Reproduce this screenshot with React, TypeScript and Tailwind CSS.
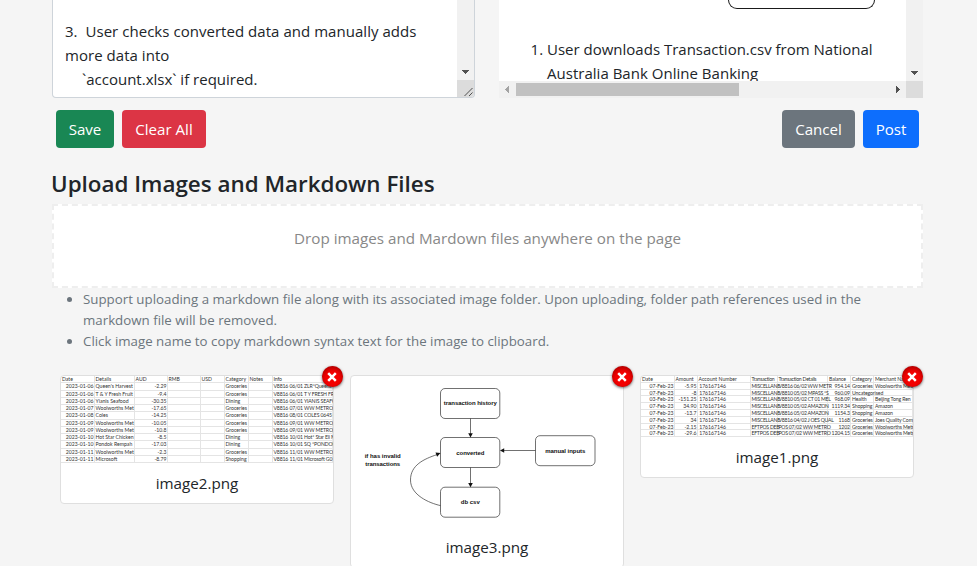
import { ReactNode } from 'react';

type Dir = 'down' | 'left' | 'right';

const arrowShapes: Record<Dir, string> = {
  down: 'M1 3h7v1h-1v1h-1v1h-1v1h-1v-1h-1v-1h-1v-1h-1z',
  left: 'M6 1v7h-1v-1h-1v-1h-1v-1h-1v-1h1v-1h1v-1h1v-1z',
  right: 'M3 1v7h1v-1h1v-1h1v-1h1v-1h-1v-1h-1v-1h-1v-1z',
};

function ScrollArrow({ dir, className }: { dir: Dir; className: string }) {
  return (
    <svg viewBox="0 0 9 9" className={`size-[9px] shrink-0 ${className}`} shapeRendering="crispEdges" fill="currentColor">
      <path d={arrowShapes[dir]} />
    </svg>
  );
}

function Editor() {
  return (
    <div className="flex h-[98px] w-[423px] overflow-hidden rounded-b border border-t-0 border-[#ced4da] bg-white">
      <div className="flex min-w-0 flex-1 flex-col justify-end pb-1.5 pl-3 text-[15px] leading-6 whitespace-pre text-[#212529]">
        <div className="tracking-[0.04px]">3.  User checks converted data and manually adds</div>
        <div className="tracking-[0.04px]">more data into</div>
        <div className="pl-[1.5px]">{'    `account.xlsx` if required.'}</div>
      </div>
      <div className="flex w-[17px] flex-col">
        <div className="flex h-20 items-end justify-center bg-[#f1f1f1] pb-[4px]">
          <ScrollArrow dir="down" className="text-[#505050]" />
        </div>
        <div className="flex h-[17px] items-end justify-end bg-[#dcdcdc]">
          <svg viewBox="0 0 10 10" className="size-[10px]" stroke="#505050" strokeWidth="1">
            <path d="M0.5 9L8.5 1M5 9L8.5 5.5" />
          </svg>
        </div>
      </div>
    </div>
  );
}

function Preview() {
  return (
    <div className="flex h-[98px] w-[424px] flex-col">
      <div className="flex h-[81px]">
        <div className="h-[81px] min-w-0 flex-1 overflow-hidden bg-white">
          <div className="flex h-[37px] justify-end pr-[31px]">
            <div className="h-[9px] w-[147px] rounded-b-[10px] border-[1.5px] border-t-0 border-[#1a1a1a]" />
          </div>
          <ol className="list-decimal pl-12 text-[15px] leading-6 text-[#212529]">
            <li>
              User downloads Transaction.csv from National
              <br />
              <span className="tracking-[0.02px]">Australia Bank Online Banking</span>
            </li>
          </ol>
        </div>
        <div className="flex w-[17px] items-end justify-center bg-[#f1f1f1] pb-[4px]">
          <ScrollArrow dir="down" className="text-[#505050]" />
        </div>
      </div>
      <div className="flex h-[17px] items-center bg-[#f1f1f1]">
        <div className="flex w-[17px] justify-center">
          <ScrollArrow dir="left" className="text-[#a3a3a3]" />
        </div>
        <div className="h-[13px] w-[223px] bg-[#c1c1c1]" />
        <div className="flex flex-1 justify-end pr-1">
          <ScrollArrow dir="right" className="text-[#505050]" />
        </div>
        <div className="h-[17px] w-[17px] bg-[#dcdcdc]" />
      </div>
    </div>
  );
}

function Button({ className, children }: { className: string; children: ReactNode }) {
  return (
    <button className={`flex h-[38px] items-center justify-center rounded text-[15.1px] leading-6 whitespace-nowrap text-white ${className}`}>
      {children}
    </button>
  );
}

type Column = { width: string; right?: string };

const expenseColumns: Column[] = [
  { width: 'w-[33.5px]', right: 'text-right' },
  { width: 'w-[40px]' },
  { width: 'w-[33px]', right: 'text-right' },
  { width: 'w-[33px]' },
  { width: 'w-[24px]' },
  { width: 'w-[24px]' },
  { width: 'w-[24px]' },
  { width: 'w-[60.5px] tracking-[-0.14px]' },
];

const expenseRows = [
  ['Date', 'Details', 'AUD', 'RMB', 'USD', 'Category', 'Notes', 'Info'],
  ['2023-01-06', "Queen's Harvest", '-2.29', '', '', 'Groceries', '', 'V8816 06/01 ZLR*Queens'],
  ['2023-01-06', 'T & Y Fresh Fruit', '-9.4', '', '', 'Groceries', '', 'V8816 06/01 T Y FRESH FRU'],
  ['2023-01-06', 'Yianis Seafood', '-30.35', '', '', 'Dining', '', 'V8816 06/01 YIANIS SEAFO'],
  ['2023-01-07', 'Woolworths Met', '-17.65', '', '', 'Groceries', '', 'V8816 07/01 WW METRO/'],
  ['2023-01-08', 'Coles', '-14.25', '', '', 'Groceries', '', 'V8816 08/01 COLES 0645 C'],
  ['2023-01-09', 'Woolworths Met', '-10.05', '', '', 'Groceries', '', 'V8816 09/01 WW METRO/'],
  ['2023-01-09', 'Woolworths Met', '-10.8', '', '', 'Groceries', '', 'V8816 09/01 WW METRO/'],
  ['2023-01-10', 'Hot Star Chicken', '-8.5', '', '', 'Dining', '', 'V8816 10/01 Hot* Star Eli M'],
  ['2023-01-10', 'Pondok Rempah', '-17.03', '', '', 'Dining', '', 'V8816 10/01 SQ *PONDOK'],
  ['2023-01-11', 'Woolworths Met', '-2.3', '', '', 'Groceries', '', 'V8816 11/01 WW METRO/'],
  ['2023-01-11', 'Microsoft', '-8.79', '', '', 'Shopping', '', 'V8816 11/01 Microsoft G0'],
];

const bankColumns: Column[] = [
  { width: 'w-[33.5px]', right: 'text-right' },
  { width: 'w-[23px]', right: 'text-right' },
  { width: 'w-[53px]', right: 'text-right pr-[23.5px]' },
  { width: 'w-[27px] tracking-[-0.26px]' },
  { width: 'w-[50.5px] tracking-[-0.26px]' },
  { width: 'w-[23px] tracking-[-0.1px]', right: 'text-right' },
  { width: 'w-[23px] tracking-[-0.1px]' },
  { width: 'w-[39px] tracking-[-0.1px]' },
];

const bankRows = [
  ['Date', 'Amount', 'Account Number', 'Transaction', 'Transaction Details', 'Balance', 'Category', 'Merchant Na'],
  ['07-Feb-23', '-5.95', '176167146', 'MISCELLANE', 'V8816 06/02 WW METR', '954.14', 'Groceries', 'Woolworths Metr'],
  ['07-Feb-23', '-8', '176167146', 'MISCELLANE', 'V8810 05/02 MPASS *S', '960.09', 'Uncategorised', ''],
  ['03-Feb-23', '-151.25', '176167146', 'MISCELLANE', 'V8810 05/02 CT 01 MEL', '968.09', 'Health', 'Beijing Tong Ren'],
  ['07-Feb-23', '34.90', '176167146', 'MISCELLANE', 'V8810 05/02 AMAZON', '1119.34', 'Shopping', 'Amazon'],
  ['07-Feb-23', '-13.7', '176167146', 'MISCELLANE', 'V8816 05/02 AMAZON', '1154.3', 'Shopping', 'Amazon'],
  ['07-Feb-23', '34', '176167146', 'MISCELLANE', 'V8816 04/02 J OES QUAL', '1168', 'Groceries', 'Joes Quality Com'],
  ['07-Feb-23', '-2.15', '176167146', 'EFTPOS DEB', 'POS 07/02 WW METRO', '1202', 'Groceries', 'Woolworths Metr'],
  ['07-Feb-23', '-29.6', '176167146', 'EFTPOS DEB', 'POS 07/02 WW METRO', '1204.15', 'Groceries', 'Woolworths Metr'],
];

function Sheet({ rows, columns, rowClass }: { rows: string[][]; columns: Column[]; rowClass: string }) {
  return (
    <div className="w-[272px] overflow-hidden font-['Lato',sans-serif] text-[5.15px] text-[#333]">
      {rows.map((row, r) => (
        <div key={r} className={`flex border-b-[0.5px] border-[#e4e4e4] ${rowClass}`}>
          {row.map((cell, c) => (
            <div
              key={c}
              className={`shrink-0 border-r pl-px whitespace-nowrap ${cell === 'Uncategorised' ? 'border-transparent' : 'border-[#e4e4e4]'} ${columns[c].width} ${r > 0 && columns[c].right ? columns[c].right : ''}`}
            >
              {cell}
            </div>
          ))}
        </div>
      ))}
    </div>
  );
}

function FlowChart() {
  return (
    <svg viewBox="351 376 272 150" className="h-[150px] w-[272px]" fill="none" stroke="#333" strokeWidth="0.7">
      <rect x="440.5" y="388.5" width="59.3" height="30" rx="4.5" />
      <rect x="440.5" y="437.5" width="59.3" height="30" rx="4.5" />
      <rect x="440.5" y="487.2" width="59.3" height="30" rx="4.5" />
      <rect x="535.5" y="435.7" width="59.5" height="30" rx="4.5" />
      <path d="M470.5 418.5V435M470.5 467.5V485M535.5 450.5H503M440.5 505.6C429 503 410.5 495 410.5 480C410.5 465 424 459 437 454.6" />
      <g fill="#111" stroke="none">
        <path d="M468.2 433.3h4.6l-2.3 4.2zM468.2 483h4.6l-2.3 4.2zM504.2 448.2v4.6l-4.2-2.3zM435.5 452.6l1.6 4.2 3.4-3.7z" />
      </g>
      <g fill="#111" stroke="none" textAnchor="middle" className="font-['Liberation_Sans',sans-serif] text-[6px] font-bold">
        <text x="470.3" y="405.3" textLength="53">transaction history</text>
        <text x="470.3" y="454.7" textLength="28">converted</text>
        <text x="470.3" y="504.2" textLength="19">db csv</text>
        <text x="565.3" y="452.6" textLength="40">manual inputs</text>
        <text x="382.7" y="458.3" textLength="36">if has invalid</text>
        <text x="382.7" y="465.8" textLength="35">transactions</text>
      </g>
    </svg>
  );
}

function ImageCard({ name, className, nameClass, children }: { name: string; className: string; nameClass: string; children: ReactNode }) {
  return (
    <div className={`relative w-[274px] rounded border border-[#dfdfdf] bg-white ${className}`}>
      {children}
      <div className={`text-center text-[15.2px] leading-6 text-[#212529] ${nameClass}`}>{name}</div>
      <button
        aria-label={`Remove ${name}`}
        className="absolute -top-[10px] -right-[9.5px] flex size-[21px] items-center justify-center rounded-full bg-[#f40000] shadow-[0_1px_3px_rgba(0,0,0,0.6),inset_0_2px_4px_rgba(0,0,0,0.3)]"
      >
        <svg viewBox="0 0 10 10" className="size-[10px]" stroke="#fff" strokeWidth="2.5">
          <path d="M1.2 1.2L8.8 8.8M8.8 1.2L1.2 8.8" />
        </svg>
      </button>
    </div>
  );
}

export default function App() {
  return (
    <div className="h-[566px] w-[977px] overflow-hidden bg-[#f5f5f5] pl-[52px] font-['Open_Sans','Noto_Sans',sans-serif]">
      <div className="w-[871px]">
        <div className="flex justify-between">
          <Editor />
          <Preview />
        </div>
        <div className="mt-3 flex justify-between px-1">
          <div className="flex gap-2">
            <Button className="w-[58px] bg-[#198754]">Save</Button>
            <Button className="w-[84px] bg-[#dc3545]">Clear All</Button>
          </div>
          <div className="flex gap-2">
            <Button className="w-[73px] bg-[#6c757d]">Cancel</Button>
            <Button className="w-14 bg-[#0d6efd]">Post</Button>
          </div>
        </div>
        <h4 className="mt-[21px] -ml-px h-[35px] text-[22.4px] leading-[29px] font-semibold whitespace-nowrap text-[#212529]">
          Upload Images and Markdown Files
        </h4>
        <div className="h-[84px] border-2 border-dashed border-[#eee] bg-white pt-5 text-center text-[15.2px] leading-6 text-[#888]">
          Drop images and Mardown files anywhere on the page
        </div>
        <ul className="h-[87px] list-disc pt-px pl-[31px] text-[13.3px] leading-[21px] text-[#6c757d]">
          <li>
            Support uploading a markdown file along with its associated image folder. Upon uploading, folder path references used in the
            <br />
            markdown file will be removed.
          </li>
          <li>Click image name to copy markdown syntax text for the image to clipboard.</li>
        </ul>
        <div className="flex items-start gap-4 pl-2">
          <ImageCard name="image2.png" className="h-[129px]" nameClass="pt-[8px]">
            <Sheet rows={expenseRows} columns={expenseColumns} rowClass="h-[7.25px] leading-[7.25px]" />
          </ImageCard>
          <ImageCard name="image3.png" className="h-[193px]" nameClass="pt-[9px]">
            <FlowChart />
          </ImageCard>
          <ImageCard name="image1.png" className="h-[103px]" nameClass="pt-[8px]">
            <Sheet rows={bankRows} columns={bankColumns} rowClass="h-[6.8px] leading-[6.8px]" />
          </ImageCard>
        </div>
      </div>
    </div>
  );
}
